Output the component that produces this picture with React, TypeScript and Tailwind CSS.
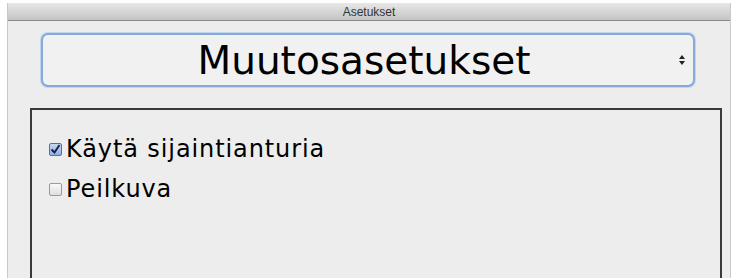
export default function App() {
  return (
    <div className="h-[278px] w-[738px] overflow-hidden bg-white pt-[3px]">
      <div className="mx-[7px] flex h-[290px] flex-col border-x border-[#c9c9c9] bg-[#ededed]">
        {/* title bar */}
        <div className="flex h-[18px] items-center justify-center border-b border-[#8a8a8a] bg-gradient-to-b from-[#e8e8e8] to-[#c4c4c4]">
          <span className="font-['Liberation_Sans',sans-serif] text-[12px] text-[#333]">
            Asetukset
          </span>
        </div>

        {/* select */}
        <div className="pl-[33px] pr-[35px] pt-[12px]">
          <div className="relative flex h-[54px] items-center justify-center rounded-[7px] border-2 border-[#86a9d8] bg-[#f1f1f1] pr-[8px] shadow-[0_0_0_1px_#c3d5ec]">
            <span className="font-['DejaVu_Sans',sans-serif] text-[39px] leading-none text-black">
              Muutosasetukset
            </span>
            <svg
              className="absolute right-[8px] top-1/2 -translate-y-1/2"
              width="6"
              height="12"
              viewBox="0 0 6 12"
            >
              <path d="M3 1 L6 5 L0 5 Z" fill="#222" />
              <path d="M3 11 L6 7 L0 7 Z" fill="#222" />
            </svg>
          </div>
        </div>

        {/* panel */}
        <div className="ml-[22px] mr-[8px] mt-[21px] flex-1 border-2 border-[#3a3a3a] bg-[#ededed] px-[17px] pt-[25px]">
          <div className="flex flex-col gap-[12px] font-['DejaVu_Sans',sans-serif] text-[24px] leading-[28px] tracking-[0.9px] text-black">
            <label className="flex items-center gap-[4px]">
              <span className="flex h-[13px] w-[13px] items-center justify-center rounded-[2px] border border-[#5a6f96] bg-gradient-to-b from-[#c8d8f4] to-[#8fb0e6]">
                <svg width="11" height="11" viewBox="0 0 11 11">
                  <path d="M1.5 5.5 L4.5 8.5 L9.5 1" stroke="#1a2440" strokeWidth="2" fill="none" />
                </svg>
              </span>
              Käytä sijaintianturia
            </label>
            <label className="flex items-center gap-[4px]">
              <span className="h-[13px] w-[13px] rounded-[2px] border border-[#9a9a9a] bg-gradient-to-b from-[#fafafa] to-[#dedede]" />
              Peilkuva
            </label>
          </div>
        </div>
      </div>
    </div>
  );
}
